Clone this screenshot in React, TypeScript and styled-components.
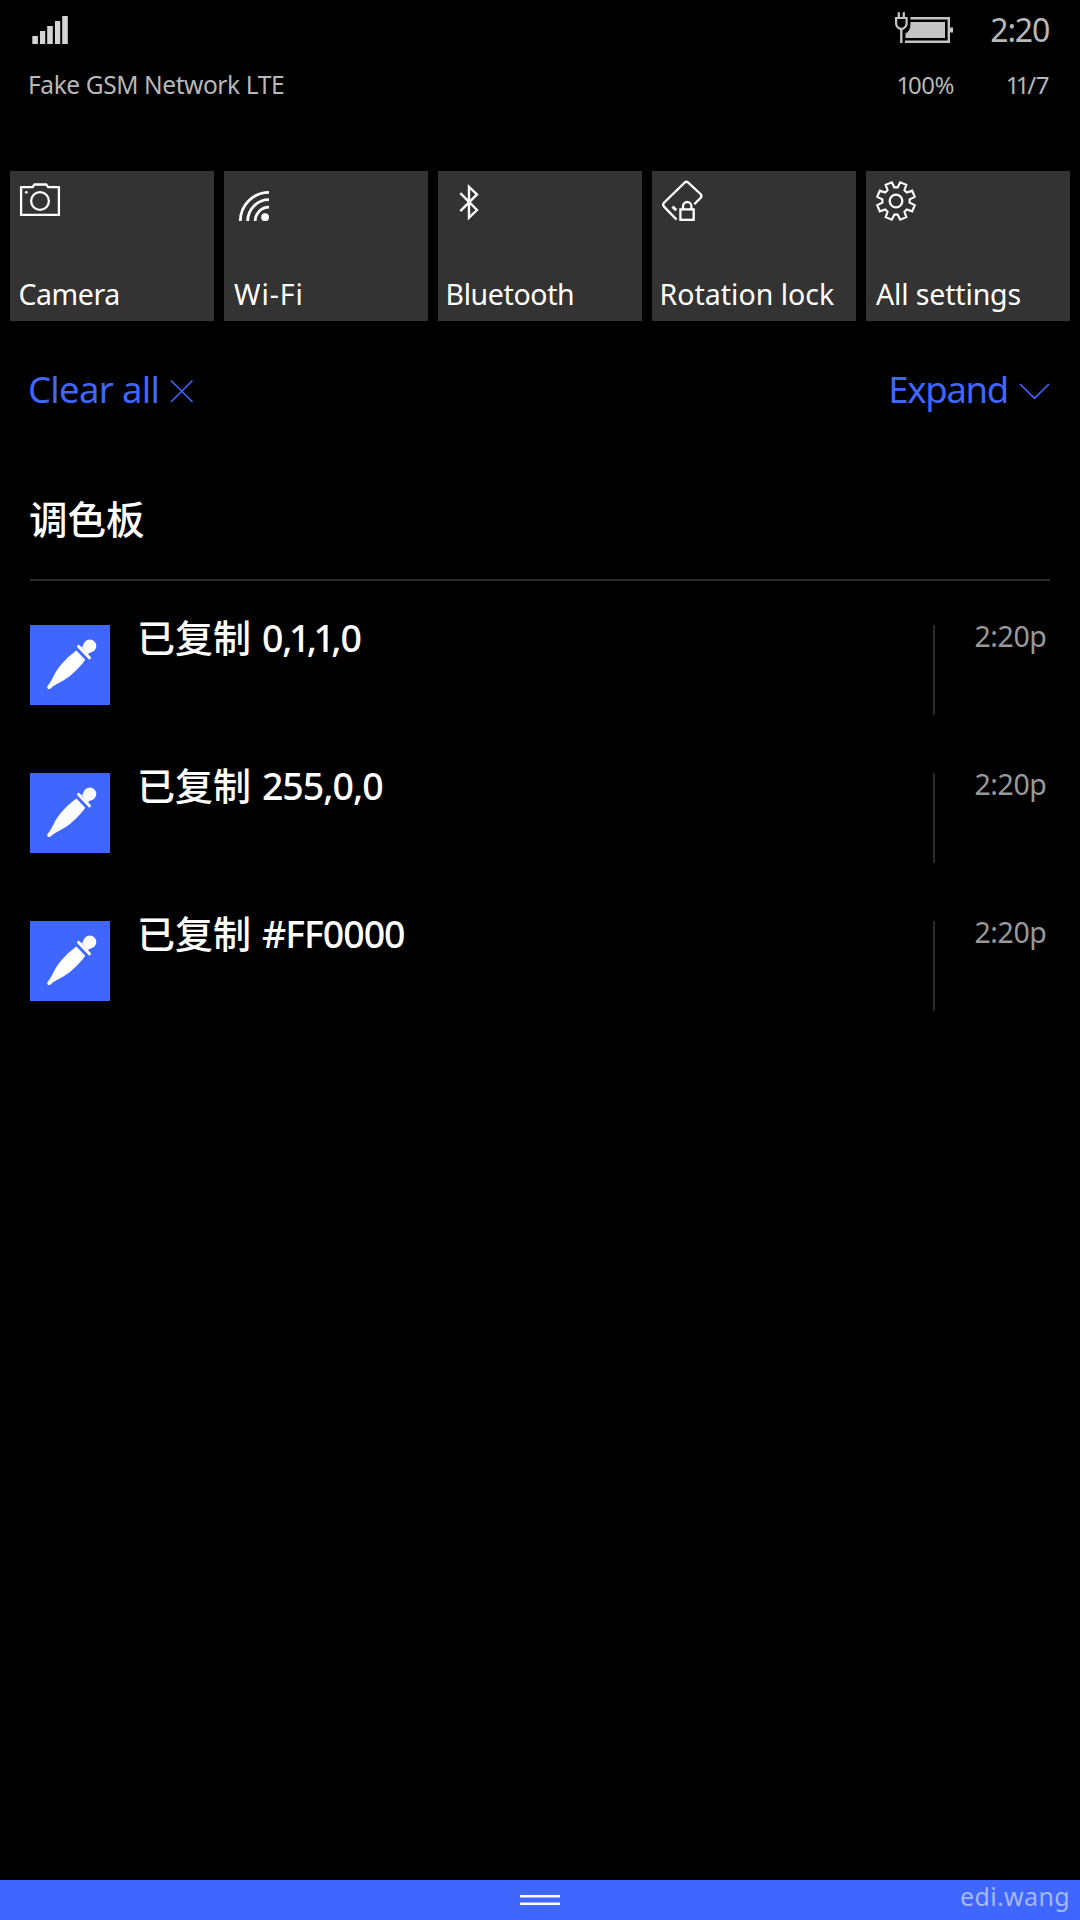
import React from 'react';
import styled, { createGlobalStyle } from 'styled-components';

const ACCENT = '#3f66ff';

const GlobalStyle = createGlobalStyle`
  html, body { margin: 0; padding: 0; background: #000; }
  *, *::before, *::after { box-sizing: border-box; }
`;

const Screen = styled.main`
  width: 1080px;
  height: 1920px;
  display: flex;
  flex-direction: column;
  background: #000;
  color: #fff;
  overflow: hidden;
  font-family: 'Noto Sans', 'Noto Sans CJK SC', sans-serif;
`;

const StatusBar = styled.header`
  height: 171px;
  padding: 0 30px 0 28px;
  color: #b8b8b8;
  display: flex;
  flex-direction: column;
`;

const StatusRow = styled.div<{ $height: number }>`
  height: ${(p) => p.$height}px;
  display: grid;
  grid-template-columns: 1fr 60px 95px;
  padding-right: 1px;
  justify-items: end;

  & > :first-child { justify-self: start; }
`;

const Text = styled.span<{ $size: number; $line: number; $track?: number }>`
  font-size: ${(p) => p.$size}px;
  line-height: ${(p) => p.$line}px;
  letter-spacing: ${(p) => p.$track ?? 0}px;
  white-space: pre;
`;

const NarrowOne = styled.span`
  margin: 0 -0.07em;
`;

const Tiles = styled.nav`
  display: grid;
  grid-template-columns: repeat(5, 204px);
  gap: 10px;
  padding: 0 10px;
`;

const Tile = styled.button`
  height: 150px;
  padding: 0 0 7px;
  border: 0;
  background: #333;
  color: #fff;
  font-family: inherit;
  display: flex;
  flex-direction: column;
  justify-content: space-between;
  align-items: flex-start;
`;

const TileLabel = styled(Text)<{ $indent: number }>`
  padding-left: ${(p) => p.$indent}px;
`;

const Actions = styled.div`
  margin-top: 38px;
  height: 60px;
  padding: 0 30px 0 28px;
  display: flex;
  justify-content: space-between;
`;

const Action = styled.button`
  padding: 0;
  border: 0;
  background: none;
  color: ${ACCENT};
  font-family: inherit;
  display: flex;
  align-items: center;
  gap: 11px;
`;

const ActionIcon = styled.svg`
  margin-top: 3px;
  fill: none;
  stroke: currentColor;
  stroke-width: 1.6;
`;

const Group = styled.section`
  margin: 70px 30px 0;
  flex: 1;
`;

const GroupTitle = styled.h2`
  margin: 0 0 0 -1px;
  font-size: 38.5px;
  line-height: 60px;
  font-weight: 500;
`;

const Rule = styled.hr`
  margin: 30px 0 44px;
  border: 0;
  height: 2px;
  background: #2b2b2b;
`;

const List = styled.ul`
  margin: 0;
  padding: 0;
  list-style: none;
  display: flex;
  flex-direction: column;
  gap: 58px;
`;

const Item = styled.li`
  height: 90px;
  display: flex;
  align-items: flex-start;
`;

const AppIcon = styled.svg`
  width: 80px;
  height: 80px;
  background: ${ACCENT};
  flex: none;
`;

const Message = styled.div`
  flex: 1;
  margin: -13px 0 0 27px;
  font-weight: 500;
  word-spacing: 1px;
  display: flex;
`;

const Time = styled.div`
  width: 117px;
  height: 90px;
  border-left: 2px solid #2b2b2b;
  padding-right: 3.5px;
  color: #999;
  display: flex;
  justify-content: flex-end;
  align-items: flex-start;

  & > span { margin-top: -9px; }
`;

const Footer = styled.footer`
  height: 40px;
  background: ${ACCENT};
  padding: 0 10px;
  display: grid;
  grid-template-columns: 1fr 40px 1fr;
  align-items: start;
`;

const Handle = styled.div`
  grid-column: 2;
  height: 10px;
  margin-top: 15px;
  display: flex;
  flex-direction: column;
  justify-content: space-between;

  &::before, &::after {
    content: '';
    height: 3px;
    background: #fff;
  }
  &::before { border-bottom: 1px solid #9fb2ff; }
  &::after { border-top: 1px solid #9fb2ff; }
`;

const Watermark = styled(Text)`
  justify-self: end;
  color: #a5b7ff;
`;

/* The digit 1 is set narrower than the other figures. */
function Figures({ text }: { text: string }) {
  return (
    <>
      {text.split('').map((ch, i) => (ch === '1' ? <NarrowOne key={i}>1</NarrowOne> : ch))}
    </>
  );
}

function SignalIcon() {
  return (
    <svg width="44" height="60" fill="#d4d4d4">
      <rect x="4.3" y="36" width="5.6" height="8" />
      <rect x="12" y="31" width="5.2" height="13" />
      <rect x="19.2" y="26" width="5.6" height="18" />
      <rect x="27" y="21" width="5.2" height="23" />
      <rect x="34.2" y="16" width="5.6" height="28" />
    </svg>
  );
}

function BatteryIcon() {
  return (
    <svg width="60" height="60" fill="none" stroke="#c4c4c4" strokeWidth="2">
      <path d="M16.4 18.2H54.8V41.8H11" strokeWidth="2.4" />
      <path d="M16.4 22H51V38H11.5V33.5C14.8 31.5 16.4 29 16.4 25Z" fill="#c4c4c4" stroke="none" />
      <rect x="56" y="27.5" width="3" height="5" fill="#c4c4c4" stroke="none" />
      <path d="M4.8 12.3V18M9.8 12.3V18" strokeWidth="2.3" />
      <path d="M2.1 18H12.6V23.5C12.6 26.5 10.1 28.8 7.3 28.8S2.1 26.5 2.1 23.5Z" strokeWidth="2.2" />
      <path d="M7.3 28.8V43" strokeWidth="2.4" />
    </svg>
  );
}

const iconProps = { width: 60, height: 60, fill: 'none', stroke: '#fff', strokeWidth: 2.3 };

function CameraIcon() {
  return (
    <svg {...iconProps}>
      <path d="M11.1 16.1H22.6L24.4 13.5H36.2L38.2 16.1H48.9V43.9H11.1Z" />
      <circle cx="30" cy="30" r="8.9" />
      <circle cx="16.3" cy="21.3" r="1.4" fill="#fff" stroke="none" />
    </svg>
  );
}

function WifiIcon() {
  return (
    <svg {...iconProps} strokeWidth={2.8}>
      <path d="M16.3 50A28.7 28.7 0 0 1 45 21.3" />
      <path d="M23.7 50A21.3 21.3 0 0 1 45 28.7" />
      <path d="M31.2 50A13.8 13.8 0 0 1 45 36.2" />
      <circle cx="41.1" cy="46.2" r="3.9" fill="#fff" stroke="none" />
    </svg>
  );
}

function BluetoothIcon() {
  return (
    <svg {...iconProps}>
      <path d="M22.3 22.2L39 39L31 46.6V15.8L39 23.4L22.3 40.2" strokeWidth="2.4" />
    </svg>
  );
}

function RotationLockIcon() {
  return (
    <svg {...iconProps}>
      <path d="M42.3 33.2L48.7 26.8Q50.2 25 48.7 23.2L36.3 11.6Q34.4 10 32.6 11.6L12 31.8Q10.2 33.8 12 35.6L24.6 48.6" />
      <path d="M20.5 35.6L24.3 39.2" strokeWidth="2.9" />
      <rect x="28.4" y="38.4" width="13.3" height="10.4" />
      <path d="M31 38V35.2A4.2 4.2 0 0 1 39.4 35.2V38" />
    </svg>
  );
}

const gearPoints = Array.from({ length: 8 }, (_, k) =>
  [
    [-7, 13.7],
    [7, 13.7],
    [12.5, 19.2],
    [32.5, 19.2],
  ].map(([offset, r]) => {
    const a = ((k * 45 + offset) * Math.PI) / 180;
    return `${(30 + r * Math.sin(a)).toFixed(2)},${(30 - r * Math.cos(a)).toFixed(2)}`;
  }),
)
  .flat()
  .join(' ');

function SettingsIcon() {
  return (
    <svg {...iconProps}>
      <polygon points={gearPoints} strokeWidth="2.1" />
      <circle cx="30" cy="30" r="6.3" />
    </svg>
  );
}

function Eyedropper() {
  return (
    <AppIcon viewBox="0 0 80 80" fill="#fff">
      <circle cx="59.8" cy="21" r="6.5" />
      <path d="M52 22L57.5 29.5L62 26L55 18Z" />
      <path d="M48.6 21.4L59.4 32.8" stroke="#fff" strokeWidth="3" strokeLinecap="round" />
      <path d="M46.4 25.4L55.2 34.8C50 42.6 41.5 50.5 34.5 54.8C28.5 58.2 23.8 60.6 19.8 64Q17 64.2 17.2 61.4C20.6 57.4 22.4 53.4 25.6 47.2C30 39.6 38.5 31 46.4 25.4Z" />
    </AppIcon>
  );
}

const tiles = [
  { label: 'Camera', Icon: CameraIcon, indent: 8.5, track: -0.45 },
  { label: 'Wi-Fi', Icon: WifiIcon, indent: 10, track: 0.9 },
  { label: 'Bluetooth', Icon: BluetoothIcon, indent: 7.5, track: -0.38 },
  { label: 'Rotation lock', Icon: RotationLockIcon, indent: 7.5, track: 0 },
  { label: 'All settings', Icon: SettingsIcon, indent: 10, track: -0.15 },
];

const notifications = [
  { value: '0,1,1,0', time: '2:20p' },
  { value: '255,0,0', time: '2:20p' },
  { value: '#FF0000', time: '2:20p' },
];

export default function App() {
  return (
    <Screen>
      <GlobalStyle />
      <StatusBar>
        <StatusRow $height={60}>
          <SignalIcon />
          <BatteryIcon />
          <Text $size={32} $line={60} $track={-1.2}>2:20</Text>
        </StatusRow>
        <StatusRow $height={50}>
          <Text $size={24.5} $line={49} $track={-0.4}>Fake GSM Network LTE</Text>
          <Text $size={24} $line={49} $track={-0.5}><Figures text="100%" /></Text>
          <Text $size={24} $line={49} $track={-0.45}><Figures text="11/7" /></Text>
        </StatusRow>
      </StatusBar>

      <Tiles>
        {tiles.map(({ label, Icon, indent, track }) => (
          <Tile key={label}>
            <Icon />
            <TileLabel $size={28.5} $line={40} $track={track} $indent={indent}>{label}</TileLabel>
          </Tile>
        ))}
      </Tiles>

      <Actions>
        <Action>
          <Text $size={36.5} $line={60} $track={-0.7}>Clear all</Text>
          <ActionIcon width="24" height="24">
            <path d="M1 1.5L22.5 23M22.5 1.5L1 23" />
          </ActionIcon>
        </Action>
        <Action>
          <Text $size={36.5} $line={60} $track={-1.3}>Expand</Text>
          <ActionIcon width="31" height="20">
            <path d="M1 3L15.5 17.4L30 3" />
          </ActionIcon>
        </Action>
      </Actions>

      <Group>
        <GroupTitle>调色板</GroupTitle>
        <Rule />
        <List>
          {notifications.map(({ value, time }) => (
            <Item key={value}>
              <Eyedropper />
              <Message>
                <Text $size={38} $line={50}>已复制 </Text>
                <Text $size={37.5} $line={52} $track={-1}><Figures text={value} /></Text>
              </Message>
              <Time>
                <Text $size={28.5} $line={40} $track={-0.4}>{time}</Text>
              </Time>
            </Item>
          ))}
        </List>
      </Group>

      <Footer>
        <Handle />
        <Watermark $size={25} $line={33} $track={0.35}>edi.wang</Watermark>
      </Footer>
    </Screen>
  );
}
